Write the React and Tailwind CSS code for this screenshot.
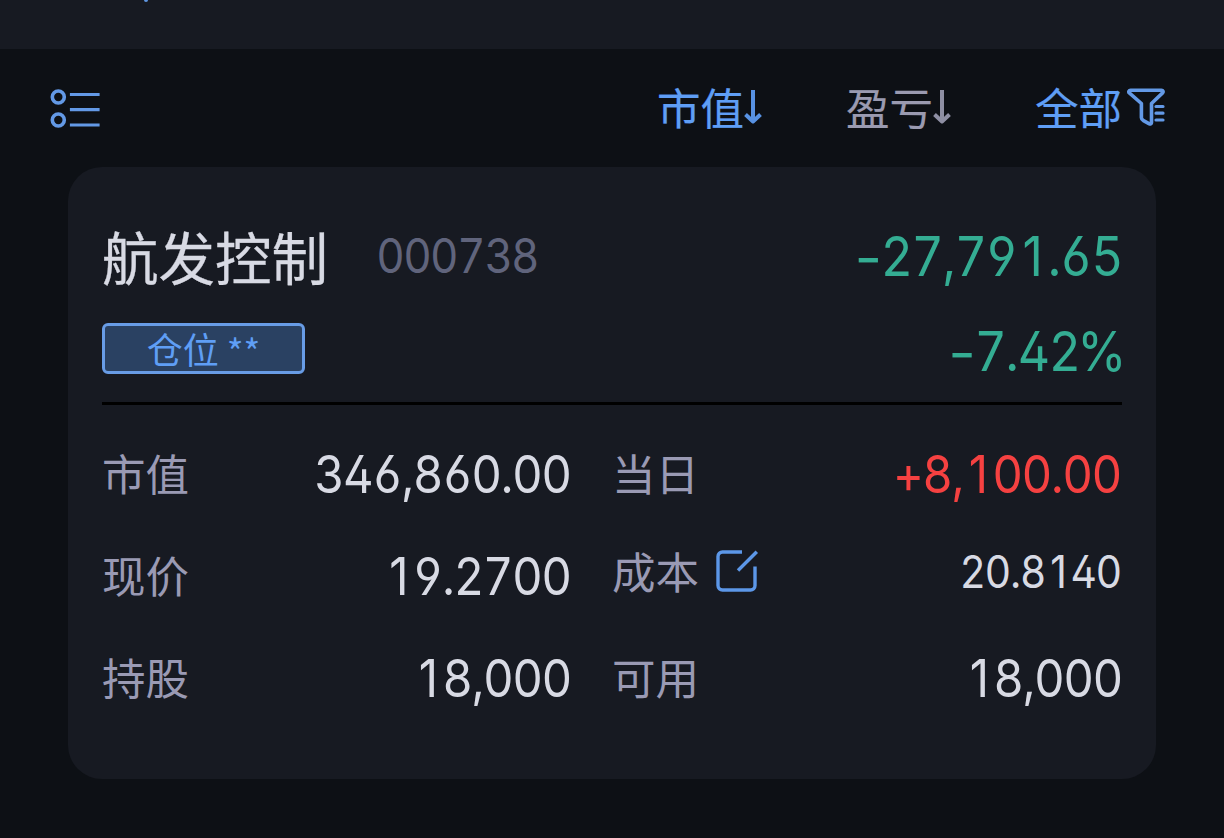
const CELL = {
  ',': 'w-[0.245em]',
  '.': 'w-[0.245em]',
  '%': 'w-[0.86em]',
  '-': 'w-[0.52em] scale-x-[1.2] translate-y-[0.02em]',
};

function Num({ children, className, left }) {
  return (
    <span
      className={`inline-flex whitespace-nowrap scale-x-[0.92] font-[Inter,sans-serif] [font-feature-settings:'cv02','cv03','cv04'] ${left ? 'origin-left' : 'origin-right'} ${className}`}
    >
      {children.split('').map((ch, i) => (
        <span key={i} className={`flex justify-center ${CELL[ch] || 'w-[0.617em]'}`}>{ch}</span>
      ))}
    </span>
  );
}

function DownArrow() {
  return (
    <svg width="20" height="38" viewBox="0 0 20 38" fill="none" stroke="currentColor" strokeWidth="4" className="-mt-[2px] -ml-px" opacity="0.92">
      <path d="M10 2V34M2.500 26.500L10 33.500L17.500 26.500" strokeLinejoin="round" />
    </svg>
  );
}

function ListIcon() {
  return (
    <svg width="50" height="40" viewBox="0 0 50 40" fill="none" stroke="#6399e6" strokeWidth="3.6" className="mt-[2px]">
      <circle cx="8.3" cy="8" r="6" />
      <circle cx="8.3" cy="31" r="6" />
      <path d="M21.500 5.500H48M21.500 20.700H48M21.500 36H48" strokeLinecap="square" strokeWidth="3.2" />
    </svg>
  );
}

function FilterIcon() {
  return (
    <svg width="38" height="38" viewBox="0 0 38 38" fill="none" stroke="#6399e6" strokeWidth="3.6" strokeLinejoin="round" className="-mt-[2px]">
      <path d="M3.5 2.2H34.5C36 2.2 36.6 3.8 35.600 4.9L24.500 15.500V34.4C24.500 35.600 23.4 36.2 22.4 35.800L16.500 32.600C15.4 32 14.4 31 14.4 29.8V15.500L2.3 4.9C1.2 3.8 2 2.2 3.500 2.2Z" />
      <path d="M29 18.500H36M29 25.200H36M29 32H36" strokeWidth="3.2" strokeLinecap="round" />
    </svg>
  );
}

function EditIcon() {
  return (
    <svg width="42" height="42" viewBox="0 0 42 42" fill="none" stroke="#5c97e8" strokeWidth="3.4" className="-mt-[3px]">
      <path d="M26 2H6.500C4 2 2 4 2 6.500V35.500C2 38 4 40 6.500 40H34.500C37 40 39 38 39 35.500V16.500" />
      <path d="M22 20.500L40.800 1.700" />
    </svg>
  );
}

function Label({ children }) {
  return <span className="-mt-[3px] text-[43.500px] leading-[60px] text-[#9a9ab4]">{children}</span>;
}

function Field({ label, value, valueClass, end }) {
  return (
    <div className={`flex h-[102px] items-center justify-between ${end ? 'pl-[42px]' : '-mr-px'}`}>
      <Label>{label}</Label>
      <Num className={`mt-[2px] text-[51.500px] ${valueClass}`}>{value}</Num>
    </div>
  );
}

export default function App() {
  return (
    <div className="flex h-[838px] w-[1224px] flex-col overflow-hidden bg-[#0d1015] font-['Noto_Sans_CJK_SC',sans-serif]">
      <header className="h-[49px] shrink-0 bg-[#171a22] pl-[144px]">
        <div className="h-[2px] w-[4px] rounded-b-full bg-[#5f96e2]" />
      </header>

      <nav className="flex h-[118px] shrink-0 items-center pr-[59px] pl-[50px] [-webkit-text-stroke:0.2px]">
        <ListIcon />
        <div className="ml-auto flex items-center text-[43.500px] leading-[60px] text-[#5f9ef5]">
          <span className="-mt-[3px]">市值</span>
          <DownArrow />
        </div>
        <div className="ml-[83px] flex items-center text-[43.500px] leading-[60px] text-[#9a9ab0]">
          <span className="-mt-[3px]">盈亏</span>
          <DownArrow />
        </div>
        <div className="ml-[83px] flex items-center gap-[5px] text-[43.500px] leading-[60px] text-[#5f9ef5]">
          <span className="-mt-[3px]">全部</span>
          <FilterIcon />
        </div>
      </nav>

      <main className="mx-[68px] h-[612px] shrink-0 rounded-[34px] bg-[#171a22] px-[34px] pt-[54px]">
        <div className="flex h-[72px] items-center">
          <span className="-mt-[5px] text-[56.500px] leading-[72px] text-[#d8dae4] [-webkit-text-stroke:0.3px]">航发控制</span>
          <Num left className="-mt-[3px] ml-[49px] text-[47.500px] leading-[72px] text-[#60647c]">000738</Num>
          <Num className="-mt-[2px] ml-auto text-[54.500px] leading-[72px] text-[#34ad93]">-27,791.65</Num>
        </div>
        <div className="mt-[22px] flex h-[72px] items-center justify-between">
          <div className="-mt-[5px] flex h-[51px] w-[203px] items-center justify-center rounded-[6px] border-[3px] border-[#689ce6] bg-[#2a4162] text-[36px] leading-[44px] text-[#5f9ef5]">
            <span className="-mt-[2px] whitespace-pre">仓位 <span className="inline-block translate-y-[2px]">**</span></span>
          </div>
          <Num className="-mr-px text-[54.500px] leading-[72px] text-[#34ad93]">-7.42%</Num>
        </div>
        <div className="mt-[15px] h-[3px] bg-black" />
        <div className="mt-[18px] grid grid-cols-[468px_1fr]">
          <Field label="市值" value="346,860.00" valueClass="text-[#d8dae4]" />
          <Field end label="当日" value="+8,100.00" valueClass="text-[#f54141]" />
          <Field label="现价" value="19.2700" valueClass="text-[#d8dae4]" />
          <div className="flex h-[94px] items-center pl-[42px]">
            <Label>成本</Label>
            <div className="ml-[17px]"><EditIcon /></div>
            <Num className="ml-auto text-[44.500px] text-[#d8dae4]">20.8140</Num>
          </div>
          <Field label="持股" value="18,000" valueClass="text-[#d8dae4]" />
          <Field end label="可用" value="18,000" valueClass="text-[#d8dae4]" />
        </div>
      </main>
    </div>
  );
}
